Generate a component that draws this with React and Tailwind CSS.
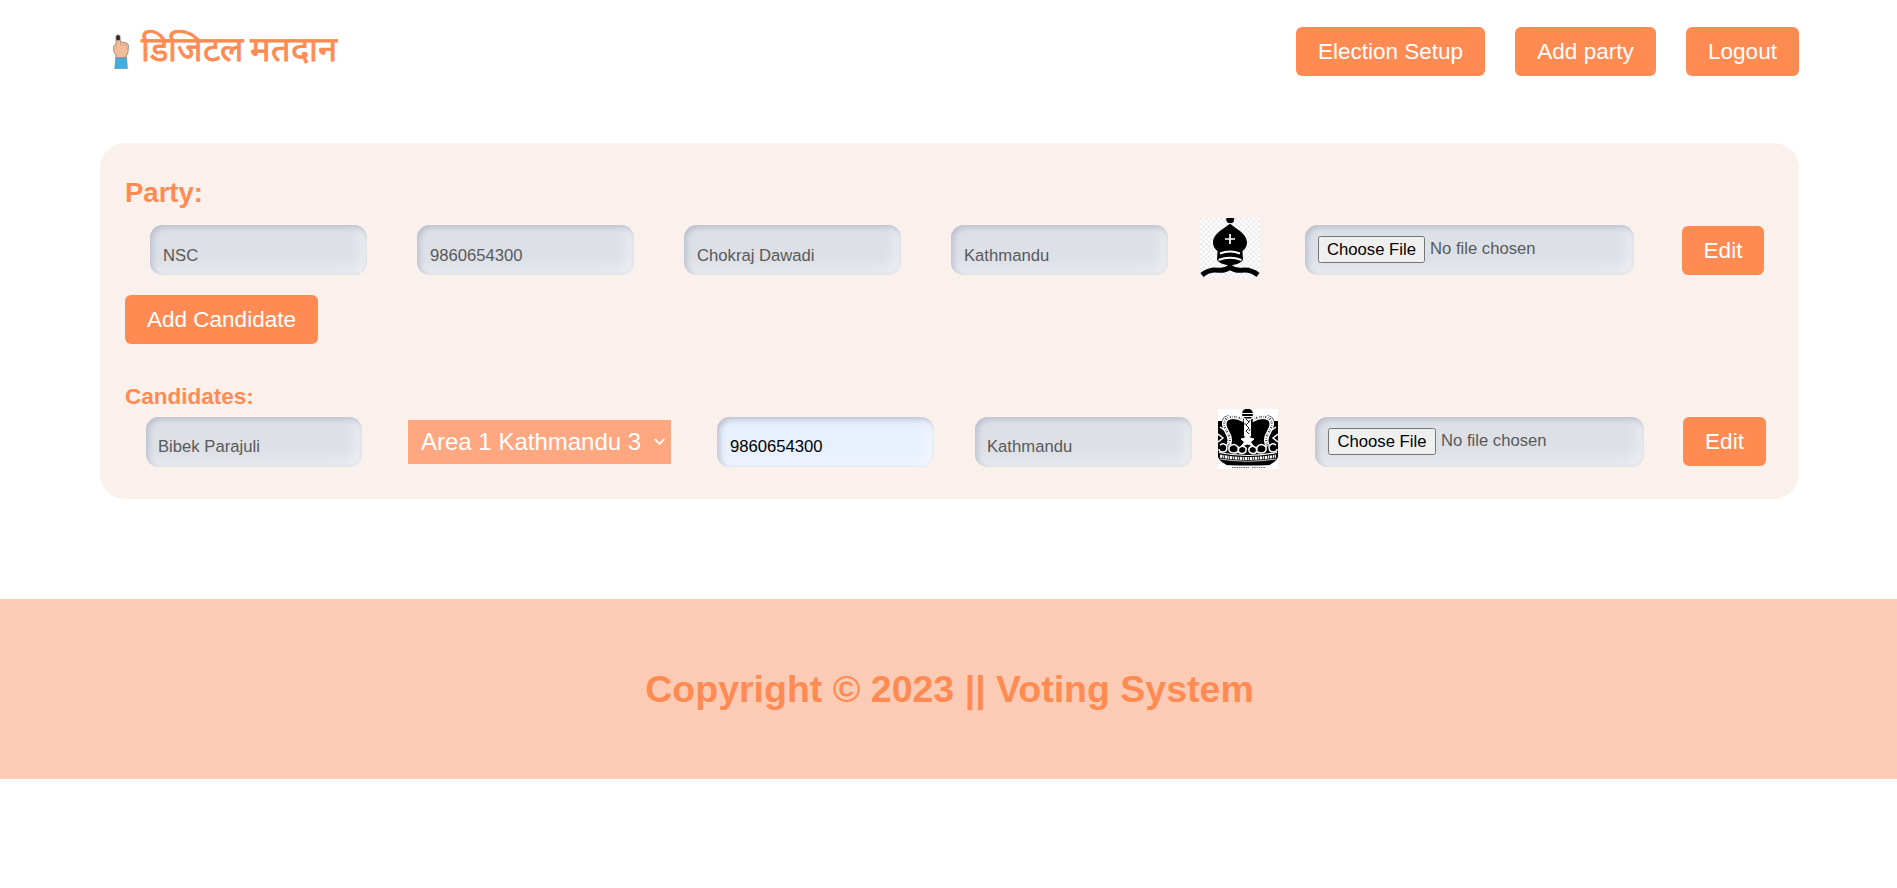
const inset =
  "shadow-[inset_2.5px_2.5px_6.25px_#babecc,inset_-6.25px_-6.25px_12.5px_#ffffff73]";

function Button({ children, className = "" }) {
  return (
    <button
      type="button"
      className={`h-[49px] shrink-0 rounded-[6px] bg-[#ff8b53] pb-[1px] text-center text-[22.5px] leading-[25px] text-white ${className}`}
    >
      {children}
    </button>
  );
}

function Field({ text, className = "", tone = "bg-[#dde1e7] text-[#595959]", pad = "pt-[12px] pl-[13px]" }) {
  return (
    <input
      readOnly
      value={text}
      className={`h-[50px] shrink-0 rounded-[12.5px] text-[16.67px] outline-none ${pad} ${inset} ${tone} ${className}`}
    />
  );
}

function FileField({ className = "", choose = "w-[107px]" }) {
  return (
    <div
      className={`flex h-[50px] w-[329px] shrink-0 items-start rounded-[12.5px] bg-[#dde1e7] pt-[11px] pl-[13px] text-[16.67px] text-[#595959] ${inset} ${className}`}
    >
      <span
        className={`flex h-[27px] items-center justify-center rounded-[2.5px] border border-[#767676] bg-[#efefef] whitespace-nowrap text-black ${choose}`}
      >
        Choose File
      </span>
      <span className="ml-[5px] leading-[25px]">No file chosen</span>
    </div>
  );
}

function Finger() {
  return (
    <svg viewBox="0 0 16 35" className="h-[35px] w-[16px] shrink-0">
      <path
        d="M3 2Q5 -.4 7 2l.4 6 3 .2 3 .8q2 .8 2 3l-.4 6.500-1.800 3.500v2H3v-3L.8 17.500.5 12.500 3 10z"
        fill="#f2bd98"
        stroke="#7d6a60"
        strokeWidth=".7"
      />
      <path d="M3.300 2Q5 .3 6.700 2l.2 3.500q-1.800 2-3.500 0z" fill="#2a2525" />
      <path d="M7.500 8.500v3.500M10.300 8.800v3M13 9.500v2.300M3 11l1.200 3" stroke="#b98a6c" strokeWidth=".5" fill="none" />
      <path d="M2.700 24H13.600l.8 10.500H1.800z" fill="#43aee4" stroke="#4f87a5" strokeWidth=".6" />
    </svg>
  );
}

function Bishop() {
  return (
    <svg viewBox="0 0 60 60" className="h-[60px] w-[60px] shrink-0">
      <defs>
        <pattern id="checks" width="5" height="5" patternUnits="userSpaceOnUse">
          <rect width="5" height="5" fill="#fff" />
          <path d="M0 0h2.5v2.5H0zM2.5 2.5H5V5H2.5z" fill="#ececec" />
        </pattern>
      </defs>
      <rect width="60" height="60" fill="url(#checks)" />
      <path d="M26.500 0h7.500q.8 3-1.800 5h-4Q25.500 3 26.500 0z" />
      <path d="M30 5.500C35 10.500 47 15 47 24.500c0 4-2 6.500-4.500 8.500l.5 9q-3 4-10 5h-6q-7-1-10-5l.5-9C15 31 13 28.500 13 24.500 13 15 25 10.500 30 5.500z" />
      <path d="M30 46v3M30 49q-5 4-12 3.200-9-1-16 4.800M30 49q5 4 12 3.200 9-1 16 4.800" fill="none" stroke="#000" strokeWidth="5" />
      <path d="M30 16v10M25 21h10" stroke="#fff" strokeWidth="1.700" />
      <path d="M20 35.500q10-4 20 0M18.500 42q11.500-4.500 23 0" fill="none" stroke="#fff" strokeWidth="1.900" />
    </svg>
  );
}

function Crown() {
  return (
    <svg viewBox="0 0 60 60" className="h-[60px] w-[60px] shrink-0">
      <rect width="60" height="60" fill="#fff" />
      <path d="M0 12h4q1-6 9-6 9 0 12 3.500h9q3-3.500 12-3.500 9 0 10 6h4v41l-7 3q-23 1-46 0l-7-3z" />
      <ellipse cx="29.500" cy="5" rx="5.500" ry="5.500" />
      <path d="M24 4.500h11M24.500 7.500h10" stroke="#fff" strokeWidth="1" />
      <g fill="none" stroke="#fff">
        <path d="M26 11Q15 5 8 10q-4 5 1 13 5 8 1 14M34 11q11-6 18-1 4 5-1 13-5 8-1 14" strokeWidth="4.500" />
        <path d="M26 11Q15 5 8 10q-4 5 1 13 5 8 1 14M34 11q11-6 18-1 4 5-1 13-5 8-1 14" stroke="#222" strokeWidth="2" strokeDasharray="1 1.900 .5 1.200" />
        <path d="M29.500 9.500v18" strokeWidth="7" />
        <path d="M28 10l3 3-3 3 3 3-3 3 3 3M32 11l-1 2M27 14v2M32 20l-1 2" stroke="#222" strokeWidth="1" />
        <path d="M29.500 25l2.500 4 4 1-3.500 3 3 4-6-2-6 2 3-4-3.500-3 4-1z" fill="#fff" strokeWidth="1" />
        <path d="M11 38q5-5 9 0 2 6-4 6t-5-6M20 40q4-5 8-1 1 5-3.500 5.500T20 40M31 39q4-4 8 1 0 5-4.500 4.500T31 39M39 38q4-5 9 0 1 6-5 6t-4-6" strokeWidth="1.600" />
        <path d="M2 36q5-3 7 2 0 5-4 5t-4-3M58 36q-5-3-7 2 0 5 4 5t4-3M0 25l5 4-5 4M60 25l-5 4 5 4M2 18l4 3M58 18l-4 3" strokeWidth="1.500" />
        <path d="M1 43.500q28.500 6 58 0" strokeWidth="1.200" />
        <path d="M2 47q27.500 5 56 0" strokeWidth="3" strokeDasharray="2.500 .8 1 .7" />
        <path d="M2 50q27.500 4.500 56 0" strokeWidth=".8" />
      </g>
      <path d="M0 48q2 5 8 7.500v1H0zM60 48q-2 5-8 7.500v1h8z" fill="#fff" />
      <path d="M14 58.500h17M34 58.500h14" stroke="#666" strokeWidth="1" strokeDasharray="1.500 .8" />
    </svg>
  );
}

export default function App() {
  return (
    <div className="min-h-[888px] bg-white font-['Liberation_Sans',Arial,sans-serif]">
      <header className="flex h-[143px] items-start justify-between pt-[27px] pr-[98px] pl-[113px]">
        <div className="flex items-start pt-[7px]">
          <Finger />
          <h1 className="-mt-[2px] ml-[12px] h-[35px] text-[34.5px] leading-[35px] font-medium whitespace-nowrap text-[#ff8b53] [word-spacing:-3px] [-webkit-text-stroke:0.8px_#ff8b53]">
            डिजिटल मतदान
          </h1>
        </div>
        <nav className="flex gap-[30px]">
          <Button className="w-[189px]">Election Setup</Button>
          <Button className="w-[141px]">Add party</Button>
          <Button className="w-[113px]">Logout</Button>
        </nav>
      </header>

      <main className="mr-[98px] ml-[100px] h-[356px] rounded-[25px] bg-[#fbf1ec] pt-[34px] pl-[25px]">
        <h2 className="h-[32px] text-[27.500px] leading-[32px] font-bold text-[#ff8b53]">Party:</h2>
        <div className="mt-[9px] flex h-[60px] items-center pl-[25px]">
          <Field text="NSC" className="mt-[4px] w-[217px]" />
          <Field text="9860654300" className="mt-[4px] ml-[50px] w-[217px]" />
          <Field text="Chokraj Dawadi" className="mt-[4px] ml-[50px] w-[217px]" />
          <Field text="Kathmandu" className="mt-[4px] ml-[50px] mr-[32px] w-[217px]" />
          <Bishop />
          <FileField className="mt-[4px] ml-[45px]" />
          <Button className="mt-[5px] ml-[48px] w-[82px]">Edit</Button>
        </div>
        <Button className="mt-[17px] block w-[193px]">Add Candidate</Button>

        <h3 className="mt-[40px] h-[25px] text-[22.500px] leading-[26px] font-bold text-[#ff8b53]">Candidates:</h3>
        <div className="flex h-[60px] items-center pl-[21px]">
          <Field text="Bibek Parajuli" pad="pt-[10px] pl-[12px]" className="mt-[6px] w-[216px]" />
          <div className="mt-[6px] ml-[46px] flex h-[44px] w-[263px] shrink-0 items-center justify-between bg-[#ffa780] pr-[6px] pl-[13px] text-[24px] text-white">
            <span className="whitespace-nowrap">Area 1 Kathmandu 3</span>
            <svg viewBox="0 0 11 8" className="h-[8px] w-[11px]" fill="none" stroke="#fff" strokeWidth="1.800">
              <path d="M.8 1.200l4.700 4.800 4.700-4.800" />
            </svg>
          </div>
          <Field
            text="9860654300"
            tone="bg-[#e8f0fe] text-black"
            pad="pt-[10px] pl-[13px]"
            className="mt-[6px] ml-[46px] w-[217px]"
          />
          <Field text="Kathmandu" pad="pt-[10px] pl-[12px]" className="mt-[6px] ml-[41px] mr-[26px] w-[217px]" />
          <Crown />
          <FileField className="mt-[6px] ml-[37px]" choose="w-[108px]" />
          <Button className="mt-[5px] ml-[39px] w-[83px]">Edit</Button>
        </div>
      </main>

      <footer className="mt-[100px] flex h-[180px] items-center justify-center bg-[#fccbb5]">
        <p className="pl-[2px] text-[37.500px] leading-[43px] font-bold text-[#ff8b53]">
          Copyright © 2023 || Voting System
        </p>
      </footer>
    </div>
  );
}
